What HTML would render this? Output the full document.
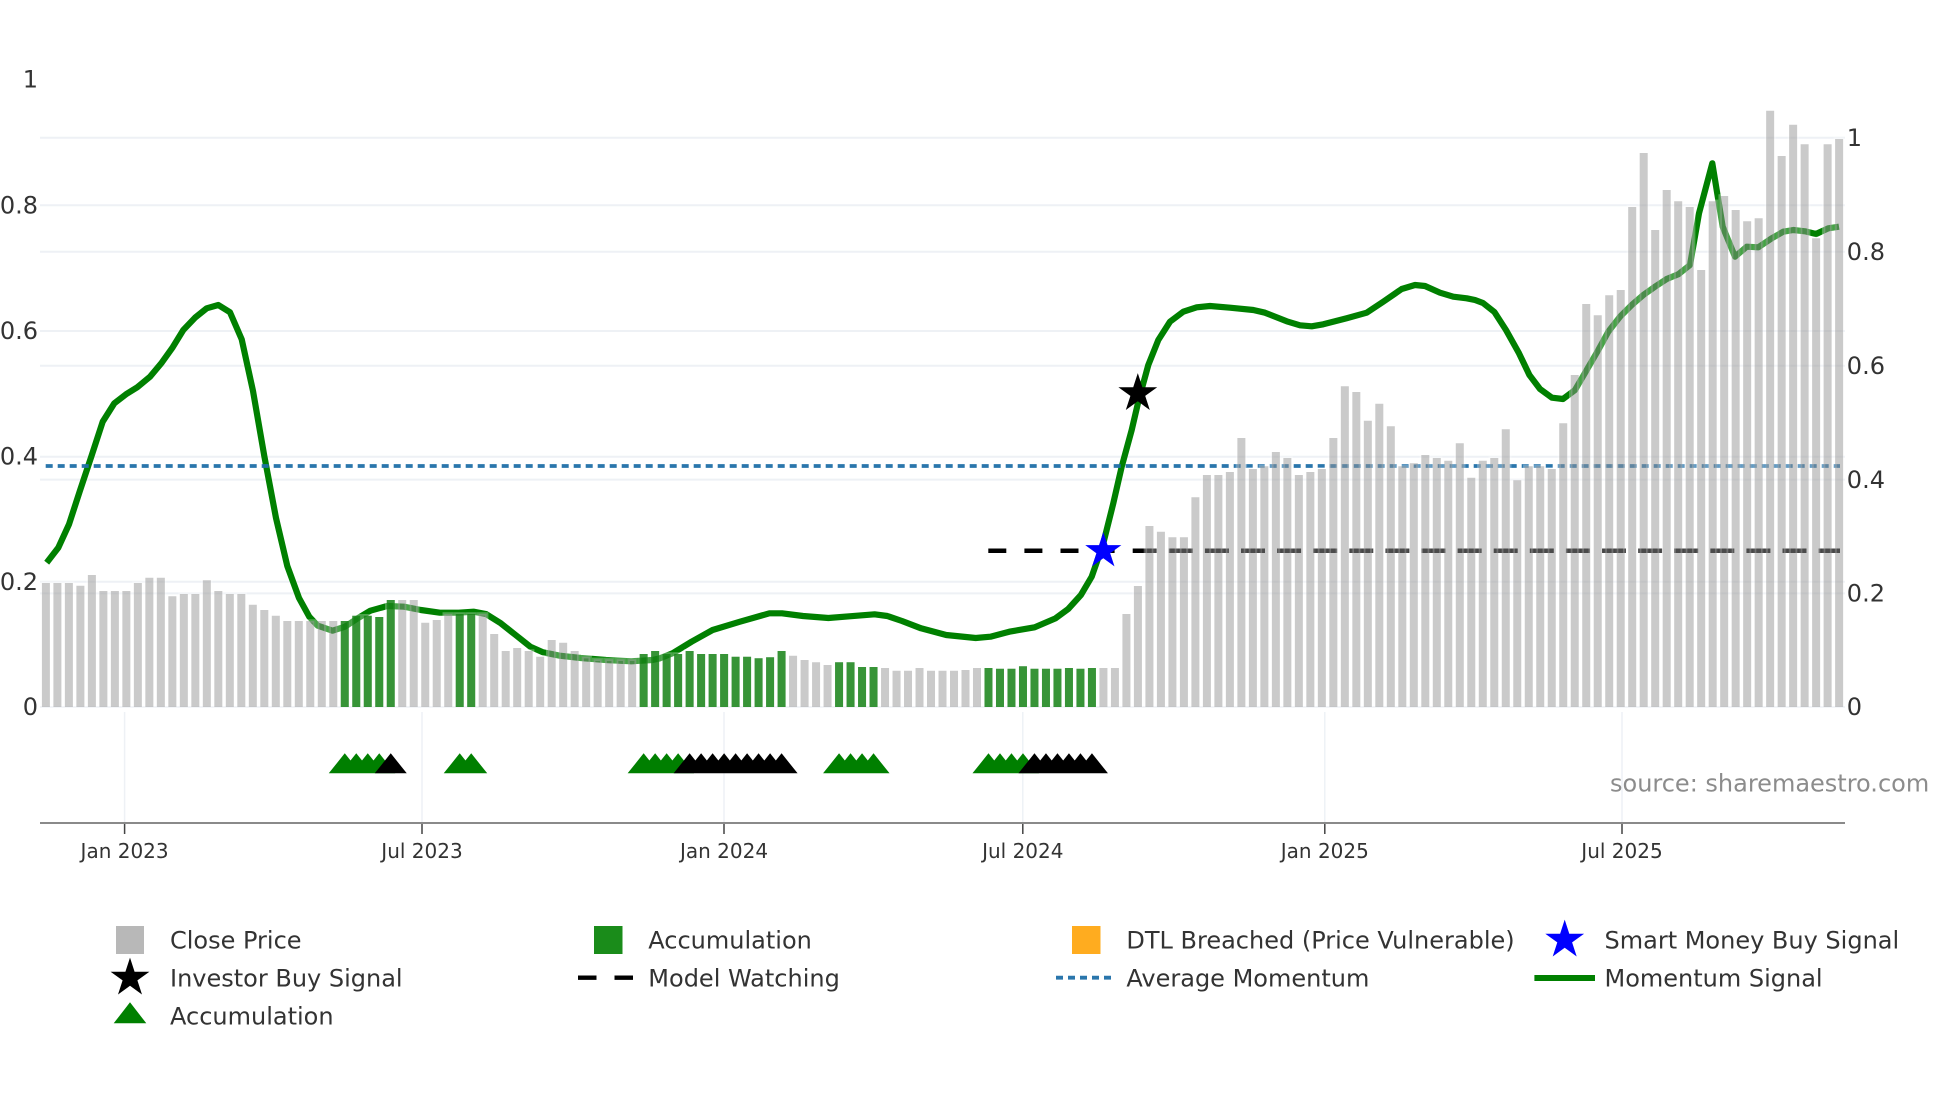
<!DOCTYPE html>
<html><head><meta charset="utf-8"><title>Chart</title>
<style>
html,body{margin:0;padding:0;background:#fff}
body{width:1960px;height:1102px;overflow:hidden}
svg{display:block}
text{font-family:"DejaVu Sans","Liberation Sans",sans-serif;fill:#333;font-size:24px}
.x{font-size:20px;text-anchor:middle}
.l{text-anchor:end}
</style></head><body>
<svg width="1960" height="1102" viewBox="0 0 1960 1102" xmlns="http://www.w3.org/2000/svg">
<rect width="1960" height="1102" fill="#fff"/>
<g stroke="#eef1f5" stroke-width="2" fill="none">
<path d="M40 137.7H1845M40 205.3H1845M40 251.7H1845M40 331H1845M40 365.7H1845M40 456.7H1845M40 479.6H1845M40 581.7H1845M40 593.4H1845M40 707H1845"/>
<path stroke-width="1.5" d="M124.6 712V823M422 712V823M724 712V823M1022.8 712V823M1324.8 712V823M1622 712V823"/>
</g>
<polyline fill="none" stroke="#008000" stroke-width="6.2" stroke-linejoin="round" points="46.7,562.7 58.3,547.7 69,524.3 80,490.5 91.5,456 102.7,421.7 114.3,403.3 126,394.3 137.3,387.3 150,376.7 161.7,362.7 172.7,347.3 183.3,330 195,317.7 206.7,308.3 218.3,305 230,312.3 241.7,339.3 253,391 264.3,456 276,518 287.3,566 299,598 309.3,616.7 317.8,625.7 332.5,630.7 345,626.7 357.7,618.3 370.4,610.7 387.2,606 404,606.7 420.9,610 439.8,612.7 458.8,612.7 473.5,611.7 486,614 500.8,623.3 515.6,635 530.3,646.7 543,652.3 559.8,655.7 580.8,658 606,660 631.3,661.3 652.4,660 660,658.3 672.6,653.3 691.6,641.7 712.6,630 740,621.7 769.4,613.3 782,613.3 803,616 828.4,618 849.4,616.3 874.6,614.3 887.3,616 902,621 921,628.3 946.2,635 975.7,638 990.4,636.7 1009.3,631.7 1034.6,627.3 1055.6,618.3 1068.2,609 1080.9,595 1091.7,576.7 1103.3,543.3 1113.3,503.3 1121.7,466.7 1131.7,430 1138.3,401.7 1148.3,365 1158.3,340 1170,321.7 1183.3,311.7 1196.7,307.3 1210,306 1230,307.7 1253.3,310 1265,312.7 1286.7,321.3 1300,325.3 1311.7,326.3 1323.3,324.3 1346.7,318.3 1366.7,312.7 1383.3,301.7 1401.7,289 1415,285 1425,286 1440,292.7 1453.3,296.7 1466.7,298.3 1475,300 1483,303 1494.4,312 1506,330 1519,353.3 1529.4,375 1540,389 1552,397.7 1563,399 1575,390 1586.7,370 1598.3,350 1608.3,331.7 1620,316.7 1631.7,305 1643.3,295 1655,286.7 1666.7,279 1678.3,274.3 1690,265 1699,213.3 1712.3,163.3 1722.7,226.7 1735,256.7 1746.7,246.7 1758.3,247.3 1771.7,238.3 1783.3,231.7 1793.3,230 1805,231.3 1816,234 1828.3,228.3 1839,226.7"/>
<path d="M45.7 466H1840" stroke="#1f6fa8" stroke-width="3.8" stroke-dasharray="7 5" fill="none" opacity=".95"/>
<path d="M988.3 550.7H1840M1138.700 550.7H1840" stroke="#000" stroke-width="4.5" stroke-dasharray="18 18.1" fill="none"/>
<path fill="rgba(150,150,150,.5)" stroke="rgba(255,255,255,.3)" stroke-width="3.4" paint-order="stroke" d="M41.9 707V583h8V707zm11.495 0V583h8V707zm11.495 0V583h8V707zm11.495 0V585.7h8V707zm11.495 0V575h8V707zm11.495 0V591h8V707zm11.495 0V591h8V707zm11.495 0V591h8V707zm11.495 0V583h8V707zm11.495 0V577.7h8V707zm11.495 0V577.7h8V707zm11.495 0V596.3h8V707zm11.495 0V594h8V707zm11.495 0V594h8V707zm11.495 0V580.3h8V707zm11.495 0V591h8V707zm11.495 0V594h8V707zm11.495 0V594h8V707zm11.495 0V604.7h8V707zm11.495 0V610h8V707zm11.495 0V615.7h8V707zm11.495 0V621h8V707zm11.495 0V621h8V707zm11.495 0V621h8V707zm11.495 0V621h8V707zm11.495 0V621h8V707zm11.495 0V621h8V707zm11.495 0V615.7h8V707zm11.495 0V615.7h8V707zm11.495 0V617h8V707zm11.495 0V600h8V707zm11.495 0V600h8V707zm11.495 0V600h8V707zm11.495 0V622.7h8V707zm11.495 0V620h8V707zm11.495 0V614h8V707zm11.495 0V614h8V707zm11.495 0V614h8V707zm11.495 0V614h8V707zm11.495 0V634h8V707zm11.495 0V651h8V707zm11.495 0V648h8V707zm11.495 0V651h8V707zm11.495 0V656.7h8V707zm11.495 0V640h8V707zm11.495 0V642.7h8V707zm11.495 0V651h8V707zm11.495 0V656.7h8V707zm11.495 0V659.3h8V707zm11.495 0V659.3h8V707zm11.495 0V659.3h8V707zm11.495 0V659.3h8V707zm11.495 0V654h8V707zm11.495 0V651h8V707zm11.495 0V654h8V707zm11.495 0V654h8V707zm11.495 0V651h8V707zm11.495 0V654h8V707zm11.495 0V654h8V707zm11.495 0V654h8V707zm11.495 0V656.7h8V707zm11.495 0V656.7h8V707zm11.495 0V658.3h8V707zm11.495 0V657.3h8V707zm11.495 0V651h8V707zm11.495 0V655.7h8V707zm11.495 0V660h8V707zm11.495 0V662.3h8V707zm11.495 0V665h8V707zm11.495 0V662.3h8V707zm11.495 0V662.3h8V707zm11.495 0V667h8V707zm11.495 0V667h8V707zm11.495 0V668h8V707zm11.495 0V670.7h8V707zm11.495 0V670.7h8V707zm11.495 0V668h8V707zm11.495 0V670.7h8V707zm11.495 0V670.7h8V707zm11.495 0V670.7h8V707zm11.495 0V670h8V707zm11.495 0V668h8V707zm11.495 0V668h8V707zm11.495 0V668.7h8V707zm11.495 0V668.7h8V707zm11.495 0V666.3h8V707zm11.495 0V668.7h8V707zm11.495 0V668.7h8V707zm11.495 0V668.7h8V707zm11.495 0V668h8V707zm11.495 0V668.7h8V707zm11.495 0V668h8V707zm11.495 0V668h8V707zm11.495 0V668h8V707zm11.495 0V614h8V707zm11.495 0V586h8V707zm11.495 0V526h8V707zm11.495 0V531.7h8V707zm11.495 0V537.3h8V707zm11.495 0V537.3h8V707zm11.495 0V497.3h8V707zm11.495 0V475h8V707zm11.495 0V475h8V707zm11.495 0V472h8V707zm11.495 0V438h8V707zm11.495 0V469h8V707zm11.495 0V466.3h8V707zm11.495 0V452h8V707zm11.495 0V458h8V707zm11.495 0V475h8V707zm11.495 0V472h8V707zm11.495 0V469h8V707zm11.495 0V438h8V707zm11.495 0V386.3h8V707zm11.495 0V392h8V707zm11.495 0V420.7h8V707zm11.495 0V403.7h8V707zm11.495 0V426.3h8V707zm11.495 0V466.3h8V707zm11.495 0V463.3h8V707zm11.495 0V455h8V707zm11.495 0V458h8V707zm11.495 0V460.7h8V707zm11.495 0V443.3h8V707zm11.495 0V477.7h8V707zm11.495 0V460.7h8V707zm11.495 0V458h8V707zm11.495 0V429.3h8V707zm11.495 0V480.3h8V707zm11.495 0V466.3h8V707zm11.495 0V466.3h8V707zm11.495 0V469h8V707zm11.495 0V423.3h8V707zm11.495 0V375h8V707zm11.495 0V304h8V707zm11.495 0V315.3h8V707zm11.495 0V295.3h8V707zm11.495 0V290h8V707zm11.495 0V207h8V707zm11.495 0V153h8V707zm11.495 0V230h8V707zm11.495 0V190h8V707zm11.495 0V201.3h8V707zm11.495 0V207h8V707zm11.495 0V270h8V707zm11.495 0V201.3h8V707zm11.495 0V196h8V707zm11.495 0V210h8V707zm11.495 0V221.3h8V707zm11.495 0V218.3h8V707zm11.495 0V110.7h8V707zm11.495 0V156h8V707zm11.495 0V124.7h8V707zm11.495 0V144.3h8V707zm11.495 0V238.3h8V707zm11.495 0V144.3h8V707zm11.495 0V139h8V707z"/>
<path fill="rgba(0,128,0,.73)" d="M340.77 707V621h8V707zm11.495 0V615.7h8V707zm11.495 0V615.7h8V707zm11.495 0V617h8V707zm11.495 0V600h8V707zM455.72 707V614h8V707zm11.495 0V614h8V707zM639.64 707V654h8V707zm11.495 0V651h8V707zm11.495 0V654h8V707zm11.495 0V654h8V707zm11.495 0V651h8V707zm11.495 0V654h8V707zm11.495 0V654h8V707zm11.495 0V654h8V707zm11.495 0V656.7h8V707zm11.495 0V656.7h8V707zm11.495 0V658.3h8V707zm11.495 0V657.3h8V707zm11.495 0V651h8V707zM835.06 707V662.3h8V707zm11.495 0V662.3h8V707zm11.495 0V667h8V707zm11.495 0V667h8V707zM984.49 707V668h8V707zm11.495 0V668.7h8V707zm11.495 0V668.7h8V707zm11.495 0V666.3h8V707zm11.495 0V668.7h8V707zm11.495 0V668.7h8V707zm11.495 0V668.7h8V707zm11.495 0V668h8V707zm11.495 0V668.7h8V707zm11.495 0V668h8V707z"/>
<path fill="#007f00" d="M344.77 753.3l16 20h-32zm11.495 0l16 20h-32zm11.495 0l16 20h-32zm11.495 0l16 20h-32zM459.72 753.3l16 20h-32zm11.495 0l16 20h-32zM643.64 753.3l16 20h-32zm11.495 0l16 20h-32zm11.495 0l16 20h-32zm11.495 0l16 20h-32zM839.06 753.3l16 20h-32zm11.495 0l16 20h-32zm11.495 0l16 20h-32zm11.495 0l16 20h-32zM988.49 753.3l16 20h-32zm11.495 0l16 20h-32zm11.495 0l16 20h-32zm11.495 0l16 20h-32z"/>
<path fill="#000" d="M390.75 753.3l16 20h-32zM689.62 753.3l16 20h-32zm11.495 0l16 20h-32zm11.495 0l16 20h-32zm11.495 0l16 20h-32zm11.495 0l16 20h-32zm11.495 0l16 20h-32zm11.495 0l16 20h-32zm11.495 0l16 20h-32zm11.495 0l16 20h-32zM1034.47 753.3l16 20h-32zm11.495 0l16 20h-32zm11.495 0l16 20h-32zm11.495 0l16 20h-32zm11.495 0l16 20h-32zm11.495 0l16 20h-32z"/>
<path fill="#0000ff" transform="translate(1103.3 551) scale(19)" d="M0-1L.2245-.309.951-.309.363.118.588.809 0 .382-.588.809-.363.118-.951-.309-.2245-.309Z"/>
<path fill="#000" transform="translate(1137.8 393.5) scale(20.4)" d="M0-1L.2245-.309.951-.309.363.118.588.809 0 .382-.588.809-.363.118-.951-.309-.2245-.309Z"/>
<path d="M40 823H1845" stroke="#8a8a8a" stroke-width="2" fill="none"/>
<path d="M124.6 824V834M422 824V834M724 824V834M1022.8 824V834M1324.8 824V834M1622 824V834" stroke="#444" stroke-width="1.5" fill="none"/>
<text class="l" x="38" y="87.7">1</text>
<text class="l" x="38" y="213.4">0.8</text>
<text class="l" x="38" y="339">0.6</text>
<text class="l" x="38" y="464.7">0.4</text>
<text class="l" x="38" y="589.8">0.2</text>
<text class="l" x="38" y="715">0</text>
<text x="1846.8" y="146">1</text>
<text x="1846.8" y="260.2">0.8</text>
<text x="1846.8" y="374">0.6</text>
<text x="1846.8" y="487.8">0.4</text>
<text x="1846.8" y="601.7">0.2</text>
<text x="1846.8" y="715">0</text>
<text class="x" x="124.6" y="858">Jan 2023</text>
<text class="x" x="422" y="858">Jul 2023</text>
<text class="x" x="724" y="858">Jan 2024</text>
<text class="x" x="1022.8" y="858">Jul 2024</text>
<text class="x" x="1324.8" y="858">Jan 2025</text>
<text class="x" x="1622" y="858">Jul 2025</text>
<text x="1610" y="791.5" style="fill:#8c8c8c">source: sharemaestro.com</text>
<rect x="116" y="926" width="28" height="28" fill="#b8b8b8"/>
<rect x="594" y="926" width="28.5" height="28" fill="#1a8c1a"/>
<rect x="1072" y="926" width="28.5" height="28" fill="#ffac1f"/>
<path fill="#0000ff" transform="translate(1564.7 940) scale(20.4)" d="M0-1L.2245-.309.951-.309.363.118.588.809 0 .382-.588.809-.363.118-.951-.309-.2245-.309Z"/>
<path fill="#000" transform="translate(130 978) scale(20.4)" d="M0-1L.2245-.309.951-.309.363.118.588.809 0 .382-.588.809-.363.118-.951-.309-.2245-.309Z"/>
<path fill="#008000" d="M130 1002.3l16.3 21h-32.6z"/>
<path d="M578 977.7H633" stroke="#000" stroke-width="4.4" stroke-dasharray="18.5 18" fill="none"/>
<path d="M1056 977.7H1112" stroke="#1f6fa8" stroke-width="3.8" stroke-dasharray="7 5" fill="none" opacity=".95"/>
<path d="M1534.4 978H1595" stroke="#008000" stroke-width="6" fill="none"/>
<text x="170" y="948.5">Close Price</text>
<text x="648.3" y="948.5">Accumulation</text>
<text x="1126.4" y="948.5">DTL Breached (Price Vulnerable)</text>
<text x="1604.5" y="948.5">Smart Money Buy Signal</text>
<text x="170" y="986.5">Investor Buy Signal</text>
<text x="648.3" y="986.5">Model Watching</text>
<text x="1126.4" y="986.5">Average Momentum</text>
<text x="1604.5" y="986.5">Momentum Signal</text>
<text x="170" y="1024.5">Accumulation</text>
</svg>
</body></html>
